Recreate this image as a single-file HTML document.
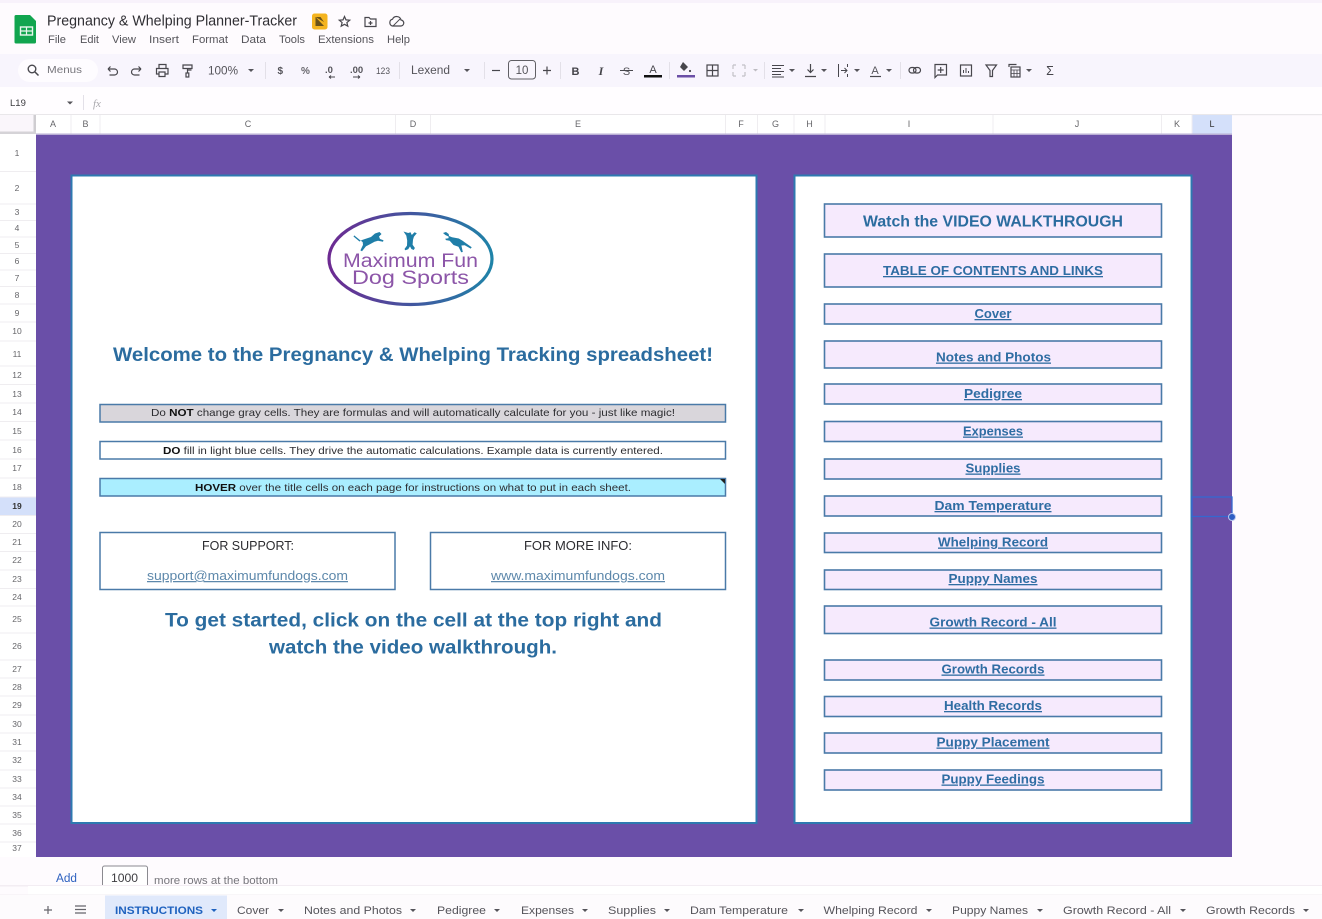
<!DOCTYPE html>
<html><head><meta charset="utf-8"><title>Pregnancy &amp; Whelping Planner-Tracker</title>
<style>
html,body{margin:0;padding:0;background:#fefbfe;width:1322px;height:919px;overflow:hidden}
svg{display:block;filter:blur(.35px)}
text{font-family:"Liberation Sans",Arial,sans-serif}
.m{font-size:11px;fill:#55545a}
.tb{font-size:10.5px;fill:#55545a}
.h{font-size:9px;fill:#66666a;text-anchor:middle}
.r{font-size:8.5px;fill:#66666a;text-anchor:middle}
.ln{stroke:#efedf0;stroke-width:1}
.i{fill:none;stroke:#48474d;stroke-width:1.2}
.box{fill:#f6eafd;stroke:#4a7aa8;stroke-width:1.6}
.lk{font-size:13px;font-weight:bold;fill:#2f6da3;text-decoration:underline}
.note{font-size:10.5px;fill:#2c2c30}
.tab{font-size:11px;fill:#55545a}
.ar{fill:#55545a}
.hd{font-weight:bold;fill:#2b6c9f}
</style></head><body>
<svg width="1322" height="919" viewBox="0 0 1322 919" xmlns="http://www.w3.org/2000/svg">
<defs><linearGradient id="g" x1="0" x2="1" y1="0" y2="0"><stop offset="0" stop-color="#6d2a92"/><stop offset=".55" stop-color="#3f5aa0"/><stop offset="1" stop-color="#1f83a8"/></linearGradient></defs>
<rect width="1322" height="919" fill="#fefbfe"/>
<rect width="1322" height="3" fill="#f8f2fb"/>

<!-- Sheets logo -->
<path d="M16 15h14l6 6v21a1.500 1.500 0 0 1-1.500 1.500h-18.500a1.500 1.500 0 0 1-1.500-1.500v-25.500a1.500 1.500 0 0 1 1.500-1.500z" fill="#11a54f"/>
<rect x="20.500" y="27" width="12" height="8" fill="none" stroke="#e8f7ee" stroke-width="1.400"/>
<path d="M26.500 27v8M20.500 31h12" stroke="#e8f7ee" stroke-width="1.200"/>

<text x="47" y="25.500" font-size="14.500" fill="#2f2e33" textLength="250" lengthAdjust="spacingAndGlyphs">Pregnancy &amp; Whelping Planner-Tracker</text>
<rect x="312" y="13.500" width="15.500" height="16" rx="2.500" fill="#f4b41f"/>
<path d="M315.500 17v9h8.500zM315.500 17h5l3.500 5" fill="#6a5218"/>
<path d="M344.500 16.500l1.500 3.400 3.700.3-2.800 2.400.9 3.600-3.300-1.900-3.300 1.900.9-3.600-2.800-2.400 3.700-.3z" class="i"/>
<path d="M365 17.500h4l1.500 1.500h5.500v7.500h-11z" class="i"/><path d="M370.500 21v4M368.500 23h4" class="i"/>
<path d="M392.500 26h8a3 3 0 0 0 .5-6 4.500 4.500 0 0 0-8.500-.8 3.500 3.500 0 0 0 0 6.800z" class="i"/><path d="M393 26l7-7" class="i" style="stroke-width:.9"/>

<text x="48" y="43" class="m" textLength="18" lengthAdjust="spacingAndGlyphs">File</text>
<text x="80" y="43" class="m" textLength="19" lengthAdjust="spacingAndGlyphs">Edit</text>
<text x="112" y="43" class="m" textLength="24" lengthAdjust="spacingAndGlyphs">View</text>
<text x="149" y="43" class="m" textLength="30" lengthAdjust="spacingAndGlyphs">Insert</text>
<text x="192" y="43" class="m" textLength="36" lengthAdjust="spacingAndGlyphs">Format</text>
<text x="241" y="43" class="m" textLength="25" lengthAdjust="spacingAndGlyphs">Data</text>
<text x="279" y="43" class="m" textLength="26" lengthAdjust="spacingAndGlyphs">Tools</text>
<text x="318" y="43" class="m" textLength="56" lengthAdjust="spacingAndGlyphs">Extensions</text>
<text x="387" y="43" class="m" textLength="23" lengthAdjust="spacingAndGlyphs">Help</text>

<!-- toolbar -->
<rect x="0" y="54" width="1322" height="33" fill="#f8f5fd"/>
<rect x="18" y="59" width="80" height="23" rx="11.500" fill="#fefcff"/>
<circle cx="32" cy="69" r="3.800" class="i" style="stroke-width:1.400"/><path d="M35 72l3.500 3.500" class="i" style="stroke-width:1.500"/>
<text x="47" y="73" font-size="10.500" fill="#77767c" textLength="35" lengthAdjust="spacingAndGlyphs">Menus</text>
<path d="M108 70h6.500a3 3 0 0 1 0 6h-5M108 70l2.500-2.500M108 70l2.500 2.500" class="i" transform="translate(0 -1)"/>
<path d="M141 70h-6.500a3 3 0 0 0 0 6h5M141 70l-2.500-2.500M141 70l-2.500 2.500" class="i" transform="translate(0 -1)"/>
<path d="M159 69v-4.500h7v4.500M159 74h-2.500v-5.500h11.500v5.500h-2.500M159 72h6v4.500h-6z" class="i"/>
<path d="M183 65h9v3.500h-9zM187.500 68.500v1.500h4M187.500 70v3" class="i"/><rect x="186" y="73" width="2.800" height="4" class="i"/>
<text x="208" y="74.500" class="tb" style="font-size:11.500px" textLength="30" lengthAdjust="spacingAndGlyphs">100%</text>
<path d="M248 69h6l-3 3z" class="ar"/>
<rect x="265" y="62" width="1" height="17" fill="#e3e0e8"/>
<text x="277.500" y="74" font-size="10" font-weight="bold" fill="#55545a">$</text>
<text x="301" y="74" font-size="10" font-weight="bold" fill="#66656b">%</text>
<text x="325" y="73" font-size="9.500" font-weight="bold" fill="#55545a">.0</text><path d="M329 77h6M329 77l2-1.500M329 77l2 1.500" class="i" style="stroke-width:.9"/>
<text x="350" y="73" font-size="9.500" font-weight="bold" fill="#55545a">.00</text><path d="M353 77h7M360 77l-2-1.500M360 77l-2 1.500" class="i" style="stroke-width:.9"/>
<text x="376" y="74" font-size="9" fill="#55545a" textLength="14" lengthAdjust="spacingAndGlyphs">123</text>
<rect x="399" y="62" width="1" height="17" fill="#e3e0e8"/>
<text x="411" y="74" class="tb" style="font-size:11.500px" textLength="39" lengthAdjust="spacingAndGlyphs">Lexend</text>
<path d="M464 69h6l-3 3z" class="ar"/>
<rect x="484" y="62" width="1" height="17" fill="#e3e0e8"/>
<path d="M492 70.500h8" class="i"/>
<rect x="508.500" y="60.500" width="27" height="18.500" rx="3" fill="none" stroke="#605f65" stroke-width="1"/>
<text x="522" y="74" class="tb" style="font-size:11.500px" text-anchor="middle">10</text>
<path d="M543 70.500h8M547 66.500v8" class="i"/>
<rect x="560" y="62" width="1" height="17" fill="#e3e0e8"/>
<text x="575.500" y="75" font-size="11" font-weight="bold" fill="#45444a" text-anchor="middle">B</text>
<text x="601" y="75" font-size="12" style="font-family:'Liberation Serif',serif" font-style="italic" font-weight="bold" fill="#45444a" text-anchor="middle">I</text>
<text x="626.500" y="75" font-size="11" fill="#55545a" text-anchor="middle">S</text><path d="M620 70.500h13" class="i" style="stroke-width:1"/>
<text x="653" y="73" font-size="11" fill="#45444a" text-anchor="middle">A</text><rect x="644" y="75" width="18" height="2.500" fill="#111"/>
<rect x="669" y="62" width="1" height="17" fill="#e3e0e8"/>
<path d="M683 62l5 5-4 4-4-4z" fill="#47464c"/><circle cx="690" cy="71" r="1.100" fill="#47464c"/>
<rect x="677" y="75" width="18" height="2.500" fill="#6b4fa6"/>
<rect x="707" y="65" width="11" height="11" class="i"/><path d="M712.500 65v11M707 70.500h11" class="i"/>
<path d="M733 65h3M733 76h3M733 65v4M733 72v4M742 65h3M742 76h3M745 65v4M745 72v4" class="i" style="stroke:#c2c1c7"/>
<path d="M753 69h5l-2.500 2.500z" fill="#bdbcc2"/>
<rect x="764" y="62" width="1" height="17" fill="#e3e0e8"/>
<path d="M772 65.500h12M772 68.500h9M772 71.500h12M772 74.500h9M772 77h12" class="i" style="stroke-width:1"/>
<path d="M789 69h6l-3 3z" class="ar"/>
<path d="M810.500 64v8M807.500 69.500l3 3 3-3M805 76.500h11" class="i"/>
<path d="M821 69h6l-3 3z" class="ar"/>
<path d="M838.500 64v13M847.500 64v3M847.500 74v3M841 70.500h6M844.500 68l2.500 2.500-2.500 2.500" class="i" style="stroke-width:1"/>
<path d="M854 69h6l-3 3z" class="ar"/>
<text x="875" y="74" font-size="11" fill="#55545a" text-anchor="middle">A</text><path d="M870 76.500h11" class="i"/>
<path d="M886 69h6l-3 3z" class="ar"/>
<rect x="900" y="62" width="1" height="17" fill="#e3e0e8"/>
<rect x="909" y="67.500" width="7" height="5.500" rx="2.700" class="i"/><rect x="913.500" y="67.500" width="7" height="5.500" rx="2.700" class="i"/>
<path d="M935 64.500h11.500v10.500h-9l-2.500 2.500zM940.700 67v6M937.700 70h6" class="i"/>
<rect x="960.500" y="65" width="11" height="11" class="i"/><path d="M963.500 73v-3M966 73v-5M968.500 73v-2" class="i" style="stroke-width:1"/>
<path d="M986 65h10.500l-4 5.500v6h-2.500v-6z" class="i"/>
<path d="M1009 67v-2.500h7.500" class="i"/><rect x="1011" y="67" width="9" height="10" class="i"/><path d="M1011 70h9M1011 73.500h9M1014 70v7M1017 70v7" class="i" style="stroke-width:.8"/>
<path d="M1026 69h6l-3 3z" class="ar"/>
<text x="1050" y="75" font-size="12.500" fill="#45444a" text-anchor="middle">Σ</text>

<!-- name box + formula bar -->
<rect x="0" y="87" width="1322" height="27" fill="#fffdff"/>
<text x="10" y="106" font-size="9.500" fill="#3c3c40">L19</text>
<path d="M67 101.500h6l-3 3z" class="ar"/>
<rect x="83" y="95" width="1" height="15" fill="#e3e0e8"/>
<text x="93" y="107" font-size="11" style="font-family:'Liberation Serif',serif" font-style="italic" fill="#a9a8ad">fx</text>

<!-- column header -->
<rect x="0" y="114" width="1322" height="1.200" fill="#e9e7ea"/>
<rect x="36" y="115" width="1196" height="19" fill="#fff"/>
<rect x="0" y="115" width="36" height="19" fill="#faf6fb"/>
<rect x="33.500" y="115" width="2.500" height="19" fill="#cfcdd1"/>
<rect x="0" y="131.500" width="36" height="2.500" fill="#d5d3d7"/>
<rect x="1192" y="115" width="40" height="19" fill="#d4e0fa"/>
<path class="ln" d="M71 115v19M100 115v19M395.500 115v19M430.500 115v19M725.500 115v19M757.500 115v19M794 115v19M825 115v19M993 115v19M1161.500 115v19M1192 115v19"/>
<text class="h" x="53" y="127">A</text><text class="h" x="85.500" y="127">B</text><text class="h" x="248" y="127">C</text><text class="h" x="413" y="127">D</text><text class="h" x="578" y="127">E</text><text class="h" x="741" y="127">F</text><text class="h" x="775.500" y="127">G</text><text class="h" x="809.500" y="127">H</text><text class="h" x="909" y="127">I</text><text class="h" x="1077" y="127">J</text><text class="h" x="1177" y="127">K</text><text class="h" x="1212" y="127" style="fill:#333">L</text>

<!-- row header -->
<rect x="0" y="134" width="36" height="723" fill="#fff"/>
<rect x="0" y="497" width="36" height="18.500" fill="#d4e0fa"/>
<path class="ln" d="M0 171.500h36M0 204h36M0 220.500h36M0 237h36M0 253.500h36M0 270h36M0 286.500h36M0 304h36M0 322h36M0 341h36M0 366h36M0 384.500h36M0 403h36M0 421.500h36M0 440h36M0 459h36M0 478h36M0 497h36M0 515.500h36M0 533.500h36M0 551.500h36M0 570h36M0 588.500h36M0 606h36M0 633h36M0 660h36M0 678h36M0 696h36M0 715h36M0 733h36M0 751h36M0 770h36M0 788h36M0 806h36M0 824h36M0 842h36"/>
<g>
<text class="r" x="17" y="156">1</text><text class="r" x="17" y="191">2</text><text class="r" x="17" y="215">3</text><text class="r" x="17" y="231">4</text><text class="r" x="17" y="248">5</text><text class="r" x="17" y="264">6</text><text class="r" x="17" y="281">7</text><text class="r" x="17" y="298">8</text><text class="r" x="17" y="316">9</text><text class="r" x="17" y="334">10</text><text class="r" x="17" y="357">11</text><text class="r" x="17" y="378">12</text><text class="r" x="17" y="397">13</text><text class="r" x="17" y="415">14</text><text class="r" x="17" y="434">15</text><text class="r" x="17" y="453">16</text><text class="r" x="17" y="471">17</text><text class="r" x="17" y="490">18</text><text class="r" x="17" y="509" font-weight="bold" style="fill:#333">19</text><text class="r" x="17" y="527">20</text><text class="r" x="17" y="545">21</text><text class="r" x="17" y="563">22</text><text class="r" x="17" y="582">23</text><text class="r" x="17" y="600">24</text><text class="r" x="17" y="622">25</text><text class="r" x="17" y="649">26</text><text class="r" x="17" y="672">27</text><text class="r" x="17" y="690">28</text><text class="r" x="17" y="708">29</text><text class="r" x="17" y="727">30</text><text class="r" x="17" y="745">31</text><text class="r" x="17" y="763">32</text><text class="r" x="17" y="782">33</text><text class="r" x="17" y="800">34</text><text class="r" x="17" y="818">35</text><text class="r" x="17" y="836">36</text><text class="r" x="17" y="851">37</text>
</g>

<!-- purple sheet -->
<rect x="36" y="134" width="1196" height="723" fill="#6a4fa8"/>
<rect x="36" y="133.500" width="1196" height="1.500" fill="#b9aed4"/>
<rect x="71.500" y="175.500" width="685" height="647.500" fill="#fff" stroke="#2e79b0" stroke-width="2"/>
<rect x="794.500" y="175.500" width="397" height="647.500" fill="#fff" stroke="#2e79b0" stroke-width="2"/>

<!-- logo -->
<ellipse cx="410.500" cy="259" rx="81.500" ry="45.500" fill="#fff" stroke="url(#g)" stroke-width="3.200"/>
<g fill="#1f7ea8">
<path d="M353.500 236.500l6 5 2.500-1.500 9-3 4-3.500 4.500-1.500 2 2-2.500 2.500 1 2.500 3.500 1.200-.5 1.500-5-1-3.500 1-5.500 3-3 1.500-4 5-1.600-.8 2.600-5.500-.3-2.800-3-2.200-5.500-4.500z"/>
<path d="M403.500 231.500l4.700 1.500 2.300-.7 1.300 2.700 2.700-2.800 2.300 1-2.900 3.500-.9 3-.4 5 2.300 3.300-1.200 2-2.300-1-1.400-2.600-1.800 2.900-2.900 1-.8-1.300 2.500-3.400.2-5-.9-5z"/>
<path d="M443 233l3-1 2.700 2 .3 2 3 1.200 6.800 1.300 3.400 2 3.500 2.500 6 4.300-1 1.300-6-3.300-3.300.2 1.400 6.500-1.600.3-2.700-5.500-5-1.800-3.800-4.300-3.700-.6-.8-1.300 3.300-.5.200-1.700-3.400-1.600z"/>
</g>
<text x="343" y="267" font-size="19" fill="#8c55a8" textLength="135" lengthAdjust="spacingAndGlyphs">Maximum Fun</text>
<text x="352" y="284" font-size="19" fill="#8c55a8" textLength="117" lengthAdjust="spacingAndGlyphs">Dog Sports</text>

<!-- left panel -->
<text class="hd" x="113" y="361" font-size="19.500" textLength="600" lengthAdjust="spacingAndGlyphs">Welcome to the Pregnancy &amp; Whelping Tracking spreadsheet!</text>

<rect x="100" y="404.500" width="625.500" height="17.500" fill="#d9d6db" stroke="#4a7aa8" stroke-width="1.500"/>
<text class="note" x="151" y="416" textLength="524" lengthAdjust="spacingAndGlyphs">Do <tspan font-weight="bold" style="fill:#111">NOT</tspan> change gray cells. They are formulas and will automatically calculate for you - just like magic!</text>
<rect x="100" y="441.500" width="625.500" height="17.500" fill="#fff" stroke="#4a7aa8" stroke-width="1.500"/>
<text class="note" x="163" y="454" textLength="500" lengthAdjust="spacingAndGlyphs"><tspan font-weight="bold" style="fill:#111">DO</tspan> fill in light blue cells. They drive the automatic calculations. Example data is currently entered.</text>
<rect x="100" y="478.500" width="625.500" height="17.500" fill="#aaeeff" stroke="#4a7aa8" stroke-width="1.500"/>
<text class="note" x="195" y="491" textLength="436" lengthAdjust="spacingAndGlyphs"><tspan font-weight="bold" style="fill:#111">HOVER</tspan> over the title cells on each page for instructions on what to put in each sheet.</text>
<path d="M720 479h5v5z" fill="#222"/>

<rect x="100" y="532.500" width="295" height="57" fill="#fff" stroke="#4a7aa8" stroke-width="1.500"/>
<rect x="430.500" y="532.500" width="295" height="57" fill="#fff" stroke="#4a7aa8" stroke-width="1.500"/>
<text x="202" y="550" font-size="12.500" fill="#2c2c30" textLength="92" lengthAdjust="spacingAndGlyphs">FOR SUPPORT:</text>
<text x="524" y="550" font-size="12.500" fill="#2c2c30" textLength="108" lengthAdjust="spacingAndGlyphs">FOR MORE INFO:</text>
<text x="147" y="580" font-size="12.500" fill="#5d88ab" text-decoration="underline" textLength="201" lengthAdjust="spacingAndGlyphs">support@maximumfundogs.com</text>
<text x="491" y="580" font-size="12.500" fill="#5d88ab" text-decoration="underline" textLength="174" lengthAdjust="spacingAndGlyphs">www.maximumfundogs.com</text>

<text class="hd" x="165" y="626.500" font-size="19.500" textLength="497" lengthAdjust="spacingAndGlyphs">To get started, click on the cell at the top right and</text>
<text class="hd" x="269" y="653.500" font-size="19.500" textLength="288" lengthAdjust="spacingAndGlyphs">watch the video walkthrough.</text>

<!-- right panel -->
<rect class="box" x="824.500" y="204" width="337" height="33"/>
<rect class="box" x="824.500" y="254" width="337" height="33"/>
<rect class="box" x="824.500" y="304" width="337" height="20"/>
<rect class="box" x="824.500" y="341" width="337" height="27"/>
<rect class="box" x="824.500" y="384" width="337" height="20"/>
<rect class="box" x="824.500" y="421.500" width="337" height="20"/>
<rect class="box" x="824.500" y="459" width="337" height="20"/>
<rect class="box" x="824.500" y="496" width="337" height="20"/>
<rect class="box" x="824.500" y="533" width="337" height="19.500"/>
<rect class="box" x="824.500" y="570" width="337" height="19.500"/>
<rect class="box" x="824.500" y="606" width="337" height="27.500"/>
<rect class="box" x="824.500" y="660" width="337" height="20"/>
<rect class="box" x="824.500" y="696.500" width="337" height="20"/>
<rect class="box" x="824.500" y="733" width="337" height="20"/>
<rect class="box" x="824.500" y="770" width="337" height="20"/>
<text class="hd" x="863" y="226.500" font-size="15.500" textLength="260" lengthAdjust="spacingAndGlyphs">Watch the VIDEO WALKTHROUGH</text>
<text class="lk" x="883" y="275" textLength="220" lengthAdjust="spacingAndGlyphs">TABLE OF CONTENTS AND LINKS</text>
<text class="lk" x="974.500" y="318" textLength="37" lengthAdjust="spacingAndGlyphs">Cover</text>
<text class="lk" x="936" y="361.500" textLength="115" lengthAdjust="spacingAndGlyphs">Notes and Photos</text>
<text class="lk" x="964" y="398" textLength="58" lengthAdjust="spacingAndGlyphs">Pedigree</text>
<text class="lk" x="963" y="435.500" textLength="60" lengthAdjust="spacingAndGlyphs">Expenses</text>
<text class="lk" x="965.500" y="472.500" textLength="55" lengthAdjust="spacingAndGlyphs">Supplies</text>
<text class="lk" x="934.500" y="510" textLength="117" lengthAdjust="spacingAndGlyphs">Dam Temperature</text>
<text class="lk" x="938" y="546.500" textLength="110" lengthAdjust="spacingAndGlyphs">Whelping Record</text>
<text class="lk" x="948.500" y="583" textLength="89" lengthAdjust="spacingAndGlyphs">Puppy Names</text>
<text class="lk" x="929.500" y="626.500" textLength="127" lengthAdjust="spacingAndGlyphs">Growth Record - All</text>
<text class="lk" x="941.500" y="673.500" textLength="103" lengthAdjust="spacingAndGlyphs">Growth Records</text>
<text class="lk" x="944" y="710" textLength="98" lengthAdjust="spacingAndGlyphs">Health Records</text>
<text class="lk" x="936.500" y="746.500" textLength="113" lengthAdjust="spacingAndGlyphs">Puppy Placement</text>
<text class="lk" x="941.500" y="783.500" textLength="103" lengthAdjust="spacingAndGlyphs">Puppy Feedings</text>

<!-- selection -->
<rect x="1192" y="497" width="40" height="19.500" fill="none" stroke="#3568cf" stroke-width="1.300"/>
<circle cx="1232" cy="517" r="3.500" fill="#2f5fc4" stroke="#b9c8ef" stroke-width="1"/>

<!-- add rows -->
<text x="56" y="882" font-size="11.500" fill="#2f62c0" textLength="21" lengthAdjust="spacingAndGlyphs">Add</text>
<path d="M102.500 886v-18a2 2 0 0 1 2-2h41a2 2 0 0 1 2 2v18" fill="#fff" stroke="#8b8a90" stroke-width="1"/>
<text x="124.500" y="882" font-size="11.500" fill="#3c3c40" text-anchor="middle" textLength="27" lengthAdjust="spacingAndGlyphs">1000</text>
<text x="154" y="884" font-size="11" fill="#77767c" textLength="124" lengthAdjust="spacingAndGlyphs">more rows at the bottom</text>

<!-- bottom bar -->
<rect x="0" y="885" width="1322" height="1.500" fill="#f3edf3"/>
<rect x="28" y="886" width="1294" height="9" fill="#fff"/>
<rect x="0" y="894.500" width="1322" height="1" fill="#f1edf2"/>
<rect x="0" y="895" width="1322" height="24" fill="#fdfbfd"/>
<path d="M44 910h8M48 906v8" class="i" style="stroke:#66656b"/>
<path d="M75 906h11M75 909.500h11M75 913h11" class="i" style="stroke:#66656b"/>
<rect x="105" y="895.500" width="122" height="23.500" fill="#e0e9fb"/>
<text x="115" y="914" font-size="11" font-weight="bold" fill="#1f62bf" textLength="88" lengthAdjust="spacingAndGlyphs">INSTRUCTIONS</text>
<path d="M211 909h6l-3 3z" fill="#1f62bf"/>
<text class="tab" x="237" y="914" textLength="32" lengthAdjust="spacingAndGlyphs">Cover</text><path class="ar" d="M278 909h6l-3 3z"/>
<text class="tab" x="304" y="914" textLength="98" lengthAdjust="spacingAndGlyphs">Notes and Photos</text><path class="ar" d="M410 909h6l-3 3z"/>
<text class="tab" x="437" y="914" textLength="49" lengthAdjust="spacingAndGlyphs">Pedigree</text><path class="ar" d="M494 909h6l-3 3z"/>
<text class="tab" x="521" y="914" textLength="53" lengthAdjust="spacingAndGlyphs">Expenses</text><path class="ar" d="M582 909h6l-3 3z"/>
<text class="tab" x="608" y="914" textLength="48" lengthAdjust="spacingAndGlyphs">Supplies</text><path class="ar" d="M664 909h6l-3 3z"/>
<text class="tab" x="690" y="914" textLength="98" lengthAdjust="spacingAndGlyphs">Dam Temperature</text><path class="ar" d="M798 909h6l-3 3z"/>
<text class="tab" x="823.500" y="914" textLength="94" lengthAdjust="spacingAndGlyphs">Whelping Record</text><path class="ar" d="M926 909h6l-3 3z"/>
<text class="tab" x="952" y="914" textLength="76" lengthAdjust="spacingAndGlyphs">Puppy Names</text><path class="ar" d="M1037 909h6l-3 3z"/>
<text class="tab" x="1063" y="914" textLength="108" lengthAdjust="spacingAndGlyphs">Growth Record - All</text><path class="ar" d="M1180 909h6l-3 3z"/>
<text class="tab" x="1206" y="914" textLength="89" lengthAdjust="spacingAndGlyphs">Growth Records</text><path class="ar" d="M1303 909h6l-3 3z"/>
</svg>
</body></html>
